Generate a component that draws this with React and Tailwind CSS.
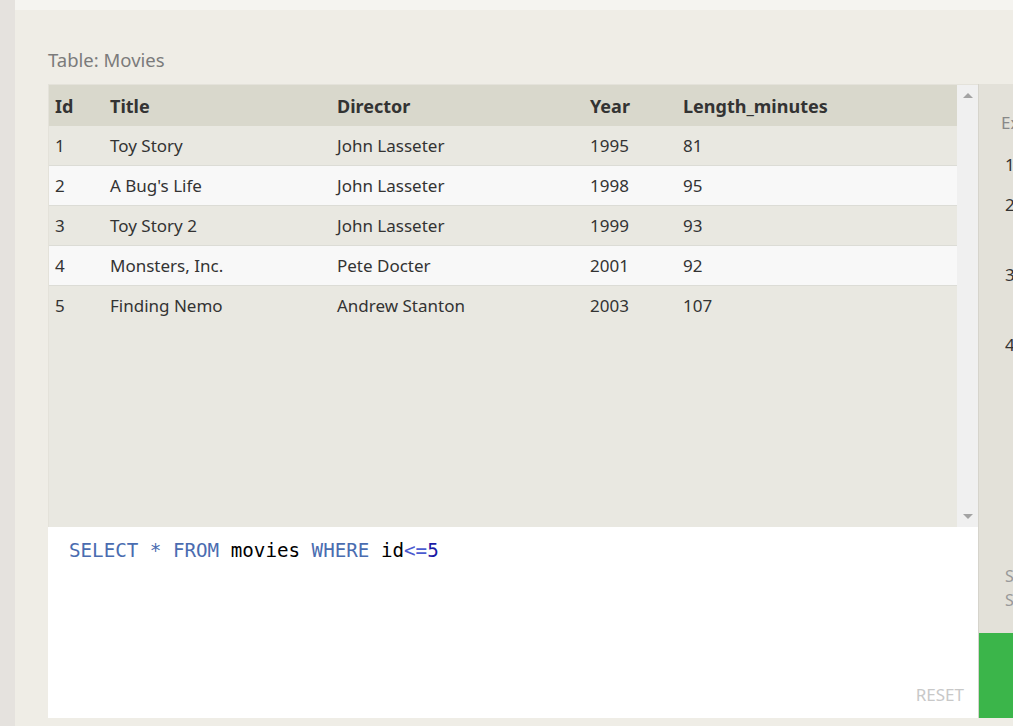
import React from "react";

const rows = [
  ["1", "Toy Story", "John Lasseter", "1995", "81"],
  ["2", "A Bug's Life", "John Lasseter", "1998", "95"],
  ["3", "Toy Story 2", "John Lasseter", "1999", "93"],
  ["4", "Monsters, Inc.", "Pete Docter", "2001", "92"],
  ["5", "Finding Nemo", "Andrew Stanton", "2003", "107"],
];

const sans = { fontFamily: '"Noto Sans", "Open Sans", sans-serif' };

function Row({ cells, bg, header, last }) {
  return (
    <div
      className={`flex items-center ${header ? "h-[41px] bg-[#d9d8cc] pt-[1px] font-bold text-[18px] text-[#333]" : `h-[40px] ${bg} ${last ? "" : "border-b border-[#dcdcd6]"} text-[17px] text-[#333]`}`}
    >
      <div className="w-[61px] pl-[6px]">{cells[0]}</div>
      <div className="w-[227px]">{cells[1]}</div>
      <div className="w-[253px]">{cells[2]}</div>
      <div className="w-[93px]">{cells[3]}</div>
      <div className="flex-1">{cells[4]}</div>
    </div>
  );
}

export default function App() {
  return (
    <div className="flex h-[726px] w-[1013px] overflow-hidden bg-[#efede6]" style={sans}>
      <div className="w-[15px] shrink-0 bg-[#e5e2de]" />
      <div className="flex min-w-0 flex-1 flex-col">
        <div className="h-[10px] shrink-0 bg-[#f5f4f0]" />
        <div className="flex min-h-0 flex-1 flex-col pl-[33px]">
          <div className="flex h-[74px] shrink-0 items-center pt-[26px] text-[18.5px] text-[#7b7b7b]">
            Table: Movies
          </div>
          <div className="flex h-[634px] shrink-0">
            <div className="flex w-[930px] shrink-0 flex-col">
              <div className="flex h-[443px] shrink-0 border-t border-l border-[#e4e2da]">
                <div className="flex-1 bg-[#e9e8e1]">
                  <Row cells={["Id", "Title", "Director", "Year", "Length_minutes"]} header />
                  {rows.map((r, i) => (
                    <Row
                      key={i}
                      cells={r}
                      last={i === rows.length - 1}
                      bg={i % 2 === 0 ? "bg-[#e9e8e1]" : "bg-[#f8f8f8]"}
                    />
                  ))}
                </div>
                <div className="flex w-[21px] shrink-0 flex-col items-center justify-between bg-[#f0f0f0] pt-[8px] pb-[8px]">
                  <div className="h-0 w-0 border-x-[5px] border-b-[5px] border-x-transparent border-b-[#a3a3a3]" />
                  <div className="h-0 w-0 border-x-[5px] border-t-[5px] border-x-transparent border-t-[#a3a3a3]" />
                </div>
              </div>
              <div className="flex flex-1 flex-col justify-between bg-white pt-[11px] pb-[11px] pl-[21px] pr-[14px]">
                <div
                  className="text-[19.2px] leading-[26px]"
                  style={{ fontFamily: '"DejaVu Sans Mono", "Liberation Mono", monospace' }}
                >
                  <span className="text-[#4a6cb0]">SELECT * FROM </span>
                  <span className="text-black">movies </span>
                  <span className="text-[#4a6cb0]">WHERE </span>
                  <span className="text-black">id</span>
                  <span className="text-[#4b5bd0]">&lt;=</span>
                  <span className="text-[#1a1aa6]">5</span>
                </div>
                <div className="self-end text-[17px] text-[#c8c8c8]">RESET</div>
              </div>
            </div>
            <div className="flex min-w-0 flex-1 flex-col border-l border-[#d6d4cc] bg-[#e3e1d9]">
              <div className="flex-1 overflow-hidden whitespace-nowrap pt-[26px] pl-[22px]">
                <div className="text-[17px] text-[#888]">Exercise 1 — Tasks</div>
                <div className="mt-[19px] pl-[4px] text-[17px] leading-[20px] text-[#333]">
                  <div className="h-[40px]">1. Find the title of each film</div>
                  <div className="h-[70px]">2. Find the director of each film</div>
                  <div className="h-[70px]">3. Find the title and director of each film</div>
                  <div className="h-[70px]">4. Find the title and year of each film</div>
                </div>
              </div>
              <div className="whitespace-nowrap pb-[21px] pl-[26px] text-[16px] leading-[24px] text-[#999]">
                <div>Stuck? Read the hint</div>
                <div>Show solution</div>
              </div>
              <div className="h-[85px] shrink-0 bg-[#3bb54a]" />
            </div>
          </div>
          <div className="flex-1" />
        </div>
      </div>
    </div>
  );
}
